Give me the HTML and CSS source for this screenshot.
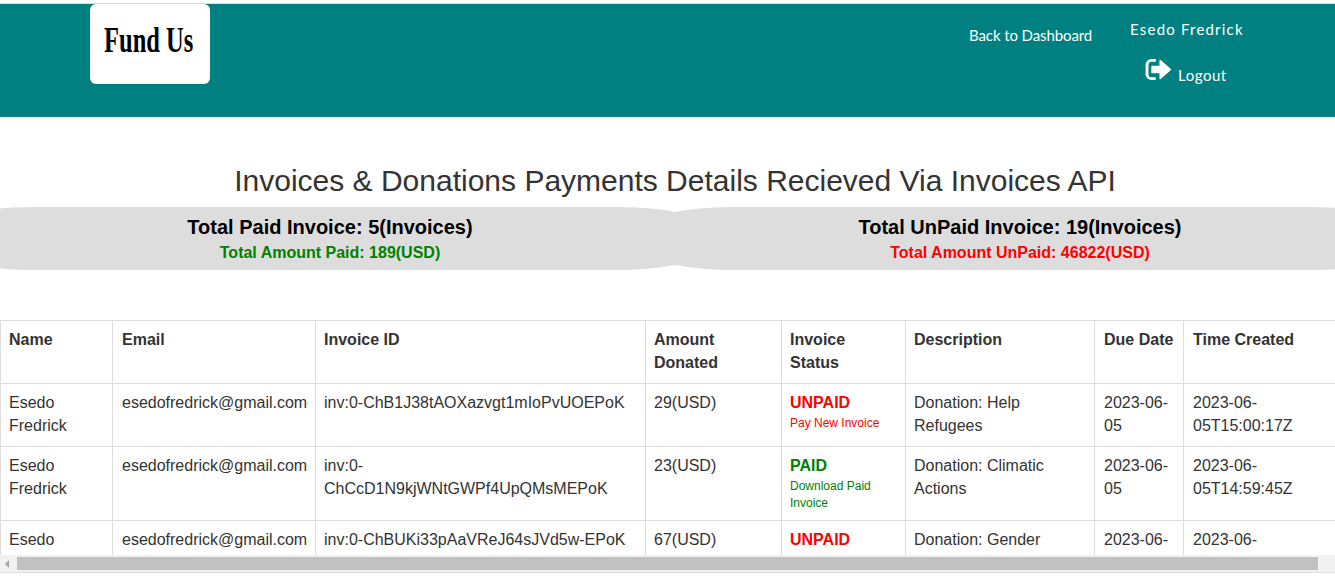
FILE: index.html
```html
<!DOCTYPE html>
<html lang="en">
<head>
    <meta charset="UTF-8">
    <title>Invoices</title>
    <link rel="stylesheet" href="styles.css">
</head>
<body>

    <header class="topbar">
        <div class="logo-box"><span class="logo-text">Fund Us</span></div>
        <a href="#" class="back-link">Back to Dashboard</a>
        <div class="user-box">
            <div class="user-name">Esedo Fredrick</div>
            <a href="#" class="logout">
                <svg class="logout-icon" viewBox="0 0 28 24" width="27" height="23">
                    <path d="M10 2.5H6.500A4.500 4.500 0 0 0 2 7v10a4.500 4.500 0 0 0 4.500 4.500H10" fill="none" stroke="#fff" stroke-width="3" stroke-linecap="round"/>
                    <path d="M7.500 8H15V2.300a.6.6 0 0 1 1-.4L26.700 11.300a1 1 0 0 1 0 1.400L16 22.100a.6.6 0 0 1-1-.4V16H7.500a1 1 0 0 1-1-1V9a1 1 0 0 1 1-1z" fill="#fff"/>
                </svg>
                <span>Logout</span>
            </a>
        </div>
    </header>

    <h1 class="page-title">Invoices &amp; Donations Payments Details Recieved Via Invoices API</h1>

    <div class="totals">
        <div class="total-pill pill-left">
            <h3>Total Paid Invoice: 5(Invoices)</h3>
            <p class="paid">Total Amount Paid: 189(USD)</p>
        </div>
        <div class="total-pill pill-right">
            <h3>Total UnPaid Invoice: 19(Invoices)</h3>
            <p class="unpaid">Total Amount UnPaid: 46822(USD)</p>
        </div>
    </div>

    <div class="table-wrap">
        <table class="invoice-table">
            <colgroup>
                <col class="col-name">
                <col class="col-email">
                <col class="col-id">
                <col class="col-amount">
                <col class="col-status">
                <col class="col-desc">
                <col class="col-due">
                <col class="col-time">
            </colgroup>
            <thead>
                <tr>
                    <th>Name</th>
                    <th class="wide-pad">Email</th>
                    <th>Invoice ID</th>
                    <th>Amount Donated</th>
                    <th>Invoice Status</th>
                    <th>Description</th>
                    <th class="wide-pad">Due Date</th>
                    <th class="wide-pad">Time Created</th>
                </tr>
            </thead>
            <tbody>
                <tr>
                    <td>Esedo Fredrick</td>
                    <td class="wide-pad">esedofredrick@gmail.com</td>
                    <td>inv:0-ChB1J38tAOXazvgt1mIoPvUOEPoK</td>
                    <td>29(USD)</td>
                    <td><strong class="unpaid">UNPAID</strong><a href="#" class="status-link unpaid">Pay New Invoice</a></td>
                    <td>Donation: Help Refugees</td>
                    <td class="wide-pad">2023-06-05</td>
                    <td class="wide-pad">2023-06-05T15:00:17Z</td>
                </tr>
                <tr>
                    <td>Esedo Fredrick</td>
                    <td class="wide-pad">esedofredrick@gmail.com</td>
                    <td>inv:0-ChCcD1N9kjWNtGWPf4UpQMsMEPoK</td>
                    <td>23(USD)</td>
                    <td><strong class="paid">PAID</strong><a href="#" class="status-link paid">Download Paid Invoice</a></td>
                    <td>Donation: Climatic Actions</td>
                    <td class="wide-pad">2023-06-05</td>
                    <td class="wide-pad">2023-06-05T14:59:45Z</td>
                </tr>
                <tr>
                    <td>Esedo Fredrick</td>
                    <td class="wide-pad">esedofredrick@gmail.com</td>
                    <td>inv:0-ChBUKi33pAaVReJ64sJVd5w-EPoK</td>
                    <td>67(USD)</td>
                    <td><strong class="unpaid">UNPAID</strong><a href="#" class="status-link unpaid">Pay New Invoice</a></td>
                    <td>Donation: Gender Equality</td>
                    <td class="wide-pad">2023-06-05</td>
                    <td class="wide-pad">2023-06-05T14:58:12Z</td>
                </tr>
            </tbody>
        </table>
    </div>

    <div class="scroll-bar">
        <span class="scroll-arrow"></span>
        <span class="scroll-thumb"></span>
    </div>

</body>
</html>
```

FILE: styles.css
```css
html, body {
    height: 580px;
    overflow: hidden;
}
body {
    font-family: "Liberation Sans", Arial, sans-serif;
    font-size: 16px;
    line-height: 23px;
    color: #333;
    margin: 0;
    padding-top: 3px;
    background-color: #fff;
}
a {
    color: inherit;
    text-decoration: none;
}
.topbar {
    display: flex;
    align-items: flex-start;
    height: 113px;
    border-top: 1px solid #ddd;
    background-color: #008080;
    color: #fff;
    font-family: "Lato", sans-serif;
}
.logo-box {
    width: 120px;
    height: 80px;
    margin-left: 90px;
    background: #fff;
    border-radius: 6px;
    text-align: center;
}
.logo-text {
    display: inline-block;
    margin-top: 17px;
    margin-left: -5px;
    color: #000;
    font-family: "Liberation Serif", serif;
    font-size: 35px;
    line-height: 40px;
    font-weight: bold;
    white-space: nowrap;
    transform: scaleX(0.7);
}
.back-link {
    margin-left: 759px;
    margin-top: 20px;
    font-size: 15px;
    letter-spacing: -0.1px;
}
.user-box {
    margin-left: 38px;
    margin-top: 14px;
    font-size: 15px;
}
.user-name {
    letter-spacing: 1.2px;
}
.logout {
    display: flex;
    align-items: flex-start;
    gap: 6px;
    margin-top: 17px;
    margin-left: 15px;
    letter-spacing: 0.5px;
}
.logout span {
    margin-top: 6px;
}
.page-title {
    margin: 47px 0 0;
    width: 1350px;
    text-align: center;
    font-size: 30px;
    line-height: 33px;
    font-weight: 400;
}
.totals {
    display: flex;
    margin-top: 10px;
    width: 1335px;
    overflow: hidden;
    color: #000;
}
.total-pill {
    flex: none;
    height: 63px;
    padding-top: 8px;
    box-sizing: border-box;
    background: #ddd;
    border-radius: 110px / 31px;
    text-align: center;
}
.pill-left {
    width: 800px;
    margin-left: -75px;
    padding-left: 10px;
}
.pill-right {
    width: 795px;
    margin-left: -100px;
    padding-right: 5px;
}
.total-pill h3 {
    margin: 0;
    font-size: 20px;
    line-height: 24px;
    font-weight: bold;
}
.total-pill p {
    margin: 2px 0 0;
    font-weight: bold;
}
.paid {
    color: #008000;
}
.unpaid {
    color: #f00;
}
.table-wrap {
    margin-top: 50px;
    height: 235px;
    overflow: hidden;
}
.invoice-table {
    width: 1350px;
    table-layout: fixed;
    border-collapse: collapse;
}
.col-name { width: 112px; }
.col-email { width: 203px; }
.col-id { width: 330px; }
.col-amount { width: 136px; }
.col-status { width: 124px; }
.col-desc { width: 189px; }
.col-due { width: 89px; }
.col-time { width: 167px; }
.invoice-table th,
.invoice-table td {
    padding: 7px 8px 9px;
    border: 1px solid #ddd;
    text-align: left;
    vertical-align: top;
}
.invoice-table .wide-pad {
    padding-left: 9px;
    padding-right: 7px;
}
.status-link {
    display: block;
    margin-top: 1px;
    margin-bottom: -1px;
    font-size: 12px;
    line-height: 17px;
}
.scroll-bar {
    display: flex;
    align-items: center;
    height: 17px;
    border-bottom: 1px solid #ddd;
    background: #f1f1f1;
}
.scroll-arrow {
    width: 0;
    height: 0;
    margin-left: 5px;
    border-top: 4px solid transparent;
    border-bottom: 4px solid transparent;
    border-right: 4px solid #a3a3a3;
}
.scroll-thumb {
    width: 1301px;
    height: 13px;
    margin-left: 8px;
    background: #c1c1c1;
}
```
